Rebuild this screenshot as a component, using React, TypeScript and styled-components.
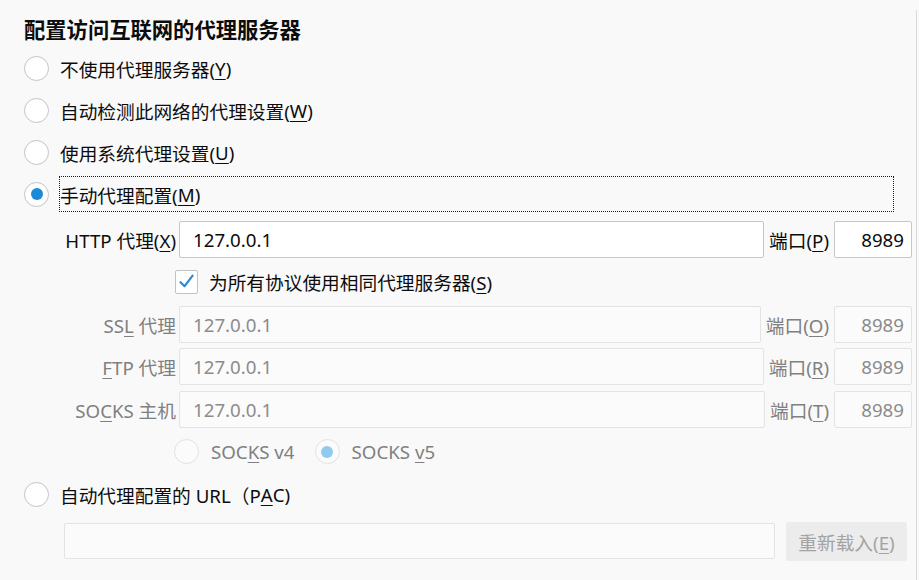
import React from "react";
import styled, { createGlobalStyle, css } from "styled-components";

const GlobalStyle = createGlobalStyle`
  html, body {
    margin: 0;
    padding: 0;
    background: #f9f9f9;
  }
  body {
    font-family: "Noto Sans", "Noto Sans CJK SC", sans-serif;
    font-size: 18.7px;
    color: #0c0c0d;
  }
`;

const Page = styled.div`
  box-sizing: border-box;
  width: 917px;
  height: 570px;
  margin-top: 10px;
  padding: 6px 4px 0 24px;
  border-right: 1px solid #d9d9d9;
  display: flex;
  flex-direction: column;
`;

const Title = styled.h1`
  margin: 0 0 3px 0;
  font-size: 21.3px;
  font-weight: bold;
  line-height: 28px;
`;

const OptionRow = styled.div<{ $height?: number }>`
  display: flex;
  align-items: center;
  height: ${({ $height }) => $height ?? 42}px;
`;

const Radio = styled.span<{ $checked?: boolean; $disabled?: boolean }>`
  box-sizing: border-box;
  position: relative;
  flex: none;
  width: 25px;
  height: 25px;
  border-radius: 50%;
  border: 1px solid ${({ $disabled }) => ($disabled ? "#e2e2e2" : "#c4c4c4")};
  background: ${({ $disabled }) => ($disabled ? "#fbfbfb" : "#ffffff")};

  ${({ $checked, $disabled }) =>
    $checked &&
    css`
      &::after {
        content: "";
        position: absolute;
        left: 5.5px;
        top: 5.5px;
        width: 12px;
        height: 12px;
        border-radius: 50%;
        background: ${$disabled ? "#8ecbee" : "#1a8ad9"};
      }
    `}
`;

const OptionLabel = styled.span<{ $focused?: boolean; $disabled?: boolean }>`
  box-sizing: border-box;
  display: flex;
  align-items: center;
  height: 36px;
  margin-left: 10px;
  padding-right: 4px;
  border: 1px dotted ${({ $focused }) => ($focused ? "#1a1a1a" : "transparent")};
  white-space: nowrap;
  color: ${({ $disabled }) => ($disabled ? "#808080" : "#0c0c0d")};
  ${({ $focused }) =>
    $focused &&
    css`
      flex: 1;
      margin-right: 18px;
    `}
`;

const Key = styled.u`
  text-decoration-thickness: 1px;
  text-underline-offset: 3px;
`;

const FieldRow = styled.div`
  display: flex;
  align-items: center;
  height: 37px;
  margin-top: 5.5px;
`;

const FieldLabel = styled.span<{ $disabled?: boolean }>`
  width: 116px;
  margin-left: 36px;
  margin-right: 3px;
  text-align: right;
  white-space: nowrap;
  color: ${({ $disabled }) => ($disabled ? "#808080" : "#0c0c0d")};
`;

const TextInput = styled.input<{ $disabled?: boolean }>`
  box-sizing: border-box;
  flex: 1;
  min-width: 0;
  height: 37px;
  padding: 0 13px;
  border: 1px solid ${({ $disabled }) => ($disabled ? "#e3e3e3" : "#c7c7c7")};
  border-radius: 2px;
  background: ${({ $disabled }) => ($disabled ? "#fbfbfb" : "#ffffff")};
  color: ${({ $disabled }) => ($disabled ? "#8c8c8c" : "#0c0c0d")};
  font-family: inherit;
  font-size: 18.7px;
  outline: none;
`;

const PortLabel = styled.span<{ $disabled?: boolean }>`
  margin: 0 5px 0 5px;
  white-space: nowrap;
  color: ${({ $disabled }) => ($disabled ? "#808080" : "#0c0c0d")};
`;

const PortInput = styled(TextInput)`
  flex: none;
  width: 78px;
  padding: 0 7px;
  text-align: right;
`;

const CheckRow = styled.div`
  display: flex;
  align-items: center;
  height: 37px;
  margin-top: 5.5px;
  padding-left: 151px;
`;

const CheckBox = styled.span`
  box-sizing: border-box;
  display: flex;
  align-items: center;
  justify-content: center;
  flex: none;
  width: 23px;
  height: 24px;
  border: 1px solid #c2c2c2;
  border-radius: 2px;
  background: #ffffff;
`;

const CheckText = styled.span`
  margin-left: 11px;
  white-space: nowrap;
`;

const SocksRow = styled.div`
  display: flex;
  align-items: center;
  height: 37px;
  margin-top: 5.5px;
  padding-left: 150px;
`;

const SocksLabel = styled.span`
  margin: 0 20px 0 12px;
  color: #808080;
  white-space: nowrap;
`;

const PacRow = styled.div`
  display: flex;
  align-items: center;
  gap: 11px;
  margin-top: 9px;
  padding: 0 5px 0 40px;
`;

const PacInput = styled(TextInput)`
  height: 36px;
`;

const ReloadButton = styled.button`
  flex: none;
  width: 121px;
  height: 39px;
  border: none;
  border-radius: 2px;
  background: #ececec;
  color: #a3a3a3;
  font-family: inherit;
  font-size: 18.7px;
  padding: 0;
`;

function CheckMark() {
  return (
    <svg width="17" height="17" viewBox="0 0 17 17">
      <path
        d="M2.5 9.2 L6.6 13.2 L14.6 2.6"
        fill="none"
        stroke="#2b8ad6"
        strokeWidth="2.2"
        strokeLinecap="round"
        strokeLinejoin="round"
      />
    </svg>
  );
}

const disabledRows = [
  { label: <>SS<Key>L</Key> 代理</>, port: <>端口(<Key>O</Key>)</> },
  { label: <><Key>F</Key>TP 代理</>, port: <>端口(<Key>R</Key>)</> },
  { label: <>SO<Key>C</Key>KS 主机</>, port: <>端口(<Key>T</Key>)</> },
];

export default function App() {
  return (
    <>
      <GlobalStyle />
      <Page>
        <Title>配置访问互联网的代理服务器</Title>

        <OptionRow>
          <Radio />
          <OptionLabel>不使用代理服务器(<Key>Y</Key>)</OptionLabel>
        </OptionRow>
        <OptionRow>
          <Radio />
          <OptionLabel>自动检测此网络的代理设置(<Key>W</Key>)</OptionLabel>
        </OptionRow>
        <OptionRow>
          <Radio />
          <OptionLabel>使用系统代理设置(<Key>U</Key>)</OptionLabel>
        </OptionRow>
        <OptionRow>
          <Radio $checked />
          <OptionLabel $focused>手动代理配置(<Key>M</Key>)</OptionLabel>
        </OptionRow>

        <FieldRow>
          <FieldLabel>HTTP 代理(<Key>X</Key>)</FieldLabel>
          <TextInput readOnly value="127.0.0.1" />
          <PortLabel>端口(<Key>P</Key>)</PortLabel>
          <PortInput readOnly value="8989" />
        </FieldRow>

        <CheckRow>
          <CheckBox>
            <CheckMark />
          </CheckBox>
          <CheckText>为所有协议使用相同代理服务器(<Key>S</Key>)</CheckText>
        </CheckRow>

        {disabledRows.map((row, i) => (
          <FieldRow key={i}>
            <FieldLabel $disabled>{row.label}</FieldLabel>
            <TextInput $disabled readOnly value="127.0.0.1" />
            <PortLabel $disabled>{row.port}</PortLabel>
            <PortInput $disabled readOnly value="8989" />
          </FieldRow>
        ))}

        <SocksRow>
          <Radio $disabled />
          <SocksLabel>SOC<Key>K</Key>S v4</SocksLabel>
          <Radio $disabled $checked />
          <SocksLabel>SOCKS <Key>v</Key>5</SocksLabel>
        </SocksRow>

        <OptionRow $height={37} style={{ marginTop: 5.5 }}>
          <Radio />
          <OptionLabel>自动代理配置的 URL（P<Key>A</Key>C)</OptionLabel>
        </OptionRow>

        <PacRow>
          <PacInput $disabled readOnly value="" />
          <ReloadButton>重新载入(<Key>E</Key>)</ReloadButton>
        </PacRow>
      </Page>
    </>
  );
}
